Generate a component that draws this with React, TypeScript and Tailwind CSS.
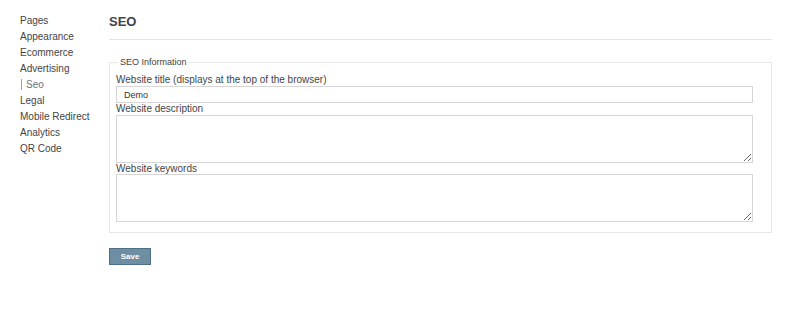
const navItems = [
  'Pages',
  'Appearance',
  'Ecommerce',
  'Advertising',
  'Seo',
  'Legal',
  'Mobile Redirect',
  'Analytics',
  'QR Code',
]

export default function App() {
  return (
    <div className="flex h-[315px] w-[800px] bg-white pl-[20px] pr-[28px] font-['Liberation_Sans',Arial,sans-serif] text-[#444]">
      <nav className="w-[89px] shrink-0 pt-[13px]">
        <ul>
          {navItems.map((item) =>
            item === 'Seo' ? (
              <li key={item} className="h-[16px] text-[10px] leading-[16px]">
                <span className="ml-[1px] border-l border-[#9aa5ad] pl-[4px] text-[#68737b]">{item}</span>
              </li>
            ) : (
              <li key={item} className="h-[16px] text-[10px] leading-[16px]">
                {item}
              </li>
            ),
          )}
        </ul>
      </nav>

      <main className="flex-1">
        <h1 className="h-[40px] border-b border-[#e3e3e3] pt-[13px] text-[13px] font-bold leading-[17px]">
          SEO
        </h1>

        <fieldset className="mt-[16px] border border-[#e8e8e8] pb-[10px] pl-[6px] pr-[18px]">
          <legend className="ml-[2px] px-[2px] text-[9px] leading-[12px]">SEO Information</legend>

          <label className="mt-[6px] block text-[10px] leading-[12px]">
            Website title (displays at the top of the browser)
          </label>
          <input
            type="text"
            defaultValue="Demo"
            className="block h-[17px] w-full border border-[#d6d6d6] px-[7px] text-[9px] text-[#333] outline-none"
          />

          <label className="block text-[10px] leading-[12px]">Website description</label>
          <textarea className="block h-[48px] w-full border border-[#d6d6d6] text-[9px] outline-none" />

          <label className="block text-[10px] leading-[11px]">Website keywords</label>
          <textarea className="block h-[48px] w-full border border-[#d6d6d6] text-[9px] outline-none" />
        </fieldset>

        <button
          type="button"
          className="mt-[15px] h-[17px] w-[42px] border border-[#4f6f86] bg-[#6e8ea4] text-[8px] font-bold leading-[15px] text-white"
        >
          Save
        </button>
      </main>
    </div>
  )
}
